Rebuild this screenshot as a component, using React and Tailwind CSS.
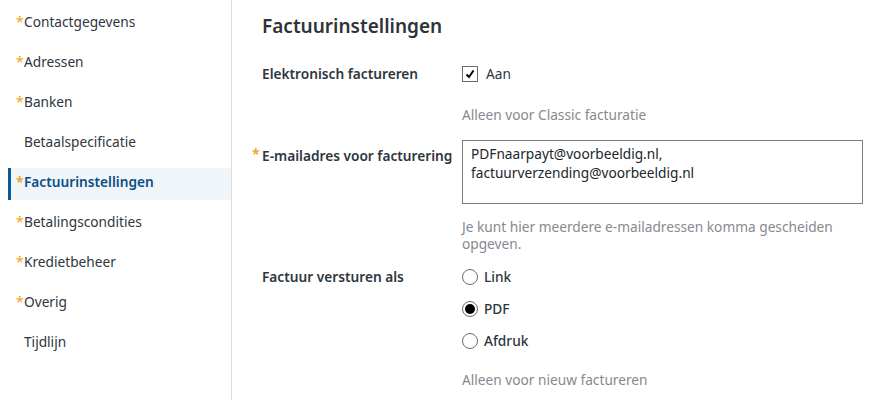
import React from 'react';

const items = [
  { label: 'Contactgegevens', req: true },
  { label: 'Adressen', req: true },
  { label: 'Banken', req: true },
  { label: 'Betaalspecificatie', req: false },
  { label: 'Factuurinstellingen', req: true, active: true },
  { label: 'Betalingscondities', req: true },
  { label: 'Kredietbeheer', req: true },
  { label: 'Overig', req: true },
  { label: 'Tijdlijn', req: false },
];

function Star({ className = '' }) {
  return <span className={`absolute text-[#f0a020] text-[14px] leading-none ${className}`}>*</span>;
}

function Radio({ checked }) {
  return (
    <span className="w-[16px] h-[16px] rounded-full border border-[#6b6b6b] bg-white flex items-center justify-center shrink-0">
      {checked && <span className="w-[10px] h-[10px] rounded-full bg-black" />}
    </span>
  );
}

export default function App() {
  return (
    <div className="flex w-[869px] h-[400px] bg-white text-[#2e3640] font-['Noto_Sans',sans-serif] text-[13.7px] overflow-hidden">
      {/* sidebar */}
      <nav className="w-[232px] shrink-0 border-r border-[#dcdcdc] pt-[8px] flex flex-col gap-[8px]">
        {items.map((it) => (
          <div
            key={it.label}
            className={`relative ml-[8px] h-[32px] flex items-center pl-[13px] border-l-[3px] ${
              it.active ? 'border-[#0b5a96] bg-[#f0f5fa] text-[#0b4f86] font-semibold' : 'border-transparent'
            }`}
          >
            {it.req && <Star className="left-[5px] top-[7px]" />}
            <span className="pb-[3px]">{it.label}</span>
          </div>
        ))}
      </nav>

      {/* content */}
      <main className="flex-1 pl-[30px] pt-[12px]">
        <h1 className="text-[19px] font-semibold text-[#2e3338] leading-[28px]">Factuurinstellingen</h1>

        <div className="mt-[22px] flex">
          <div className="w-[200px] font-semibold leading-[24px]">Elektronisch factureren</div>
          <div>
            <label className="flex items-center gap-[8px] h-[24px]">
              <span className="w-[16px] h-[16px] border border-[#6b6b6b] flex items-center justify-center">
                <svg width="10" height="10" viewBox="0 0 10 10">
                  <path d="M1.5 5.5 L4 8 L8.5 1.5" fill="none" stroke="#000" strokeWidth="2" />
                </svg>
              </span>
              <span>Aan</span>
            </label>
            <div className="mt-[19px] text-[#858a8f] leading-[20px]">Alleen voor Classic facturatie</div>
          </div>
        </div>

        <div className="mt-[15px] flex">
          <div className="relative w-[200px] font-semibold pt-[6px] leading-[20px]">
            <Star className="-left-[10px] top-[7px]" />
            E-mailadres voor facturering
          </div>
          <div className="w-[401px]">
            <div className="h-[64px] border border-[#7a7a7a] px-[8px] py-[3px] leading-[19px] text-[#20262c]">
              PDFnaarpayt@voorbeeldig.nl,
              <br />
              factuurverzending@voorbeeldig.nl
            </div>
            <div className="mt-[14px] text-[#858a8f] leading-[17px] pr-[20px]">
              Je kunt hier meerdere e-mailadressen komma gescheiden opgeven.
            </div>
          </div>
        </div>

        <div className="mt-[13px] flex">
          <div className="w-[200px] font-semibold leading-[24px]">Factuur versturen als</div>
          <div className="flex flex-col gap-[8px]">
            {[
              ['Link', false],
              ['PDF', true],
              ['Afdruk', false],
            ].map(([l, c]) => (
              <label key={l} className="flex items-center gap-[6px] h-[24px] font-medium">
                <Radio checked={c} />
                <span>{l}</span>
              </label>
            ))}
            <div className="mt-[9px] text-[#858a8f] leading-[20px]">Alleen voor nieuw factureren</div>
          </div>
        </div>
      </main>
    </div>
  );
}
